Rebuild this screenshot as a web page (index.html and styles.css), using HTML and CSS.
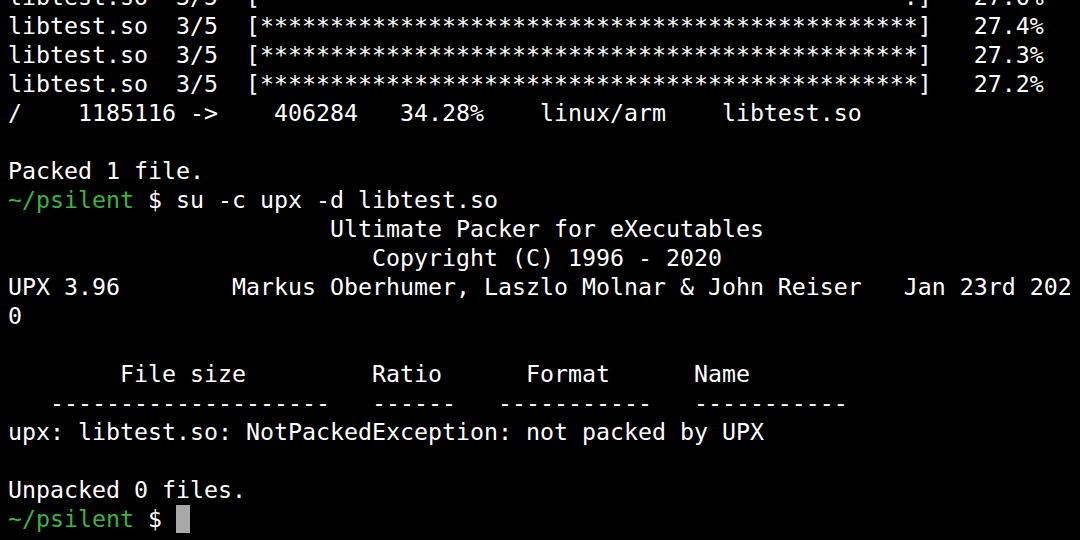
FILE: index.html
```html
<!DOCTYPE html>
<html lang="en">
<head>
    <meta charset="UTF-8">
    <meta name="viewport" content="width=device-width, initial-scale=1.0">
    <title>Terminal</title>
    <link rel="stylesheet" href="styles.css">
</head>
<body>
    <div class="terminal">
<pre class="output">libtest.so  3/5  [                                              .]   27.6%
libtest.so  3/5  [***********************************************]   27.4%
libtest.so  3/5  [***********************************************]   27.3%
libtest.so  3/5  [***********************************************]   27.2%
/    1185116 ->    406284   34.28%    linux/arm    libtest.so

Packed 1 file.
<span class="path">~/psilent</span> $ su -c upx -d libtest.so
                       Ultimate Packer for eXecutables
                          Copyright (C) 1996 - 2020
UPX 3.96        Markus Oberhumer, Laszlo Molnar &amp; John Reiser   Jan 23rd 202
0

        File size         Ratio      Format      Name
   --------------------   ------   -----------   -----------
upx: libtest.so: NotPackedException: not packed by UPX

Unpacked 0 files.
<span class="path">~/psilent</span> $ <span class="cursor"></span></pre>
    </div>
</body>
</html>
```

FILE: styles.css
```css
* {
    margin: 0;
    padding: 0;
    box-sizing: border-box;
}

body {
    background: #000;
    overflow: hidden;
}

.terminal {
    height: 540px;
    display: flex;
    flex-direction: column;
    justify-content: flex-end;
    overflow: hidden;
    padding: 0 4px 7px 8px;
}

.output {
    font-family: 'DejaVu Sans Mono', monospace;
    font-size: 23.25px;
    line-height: 29px;
    color: #fff;
    white-space: pre;
}

.path {
    color: #3cb43c;
}

.cursor {
    display: inline-block;
    width: 14px;
    height: 28px;
    vertical-align: top;
    margin-top: 1px;
    background: #a8a8a8;
}
```
